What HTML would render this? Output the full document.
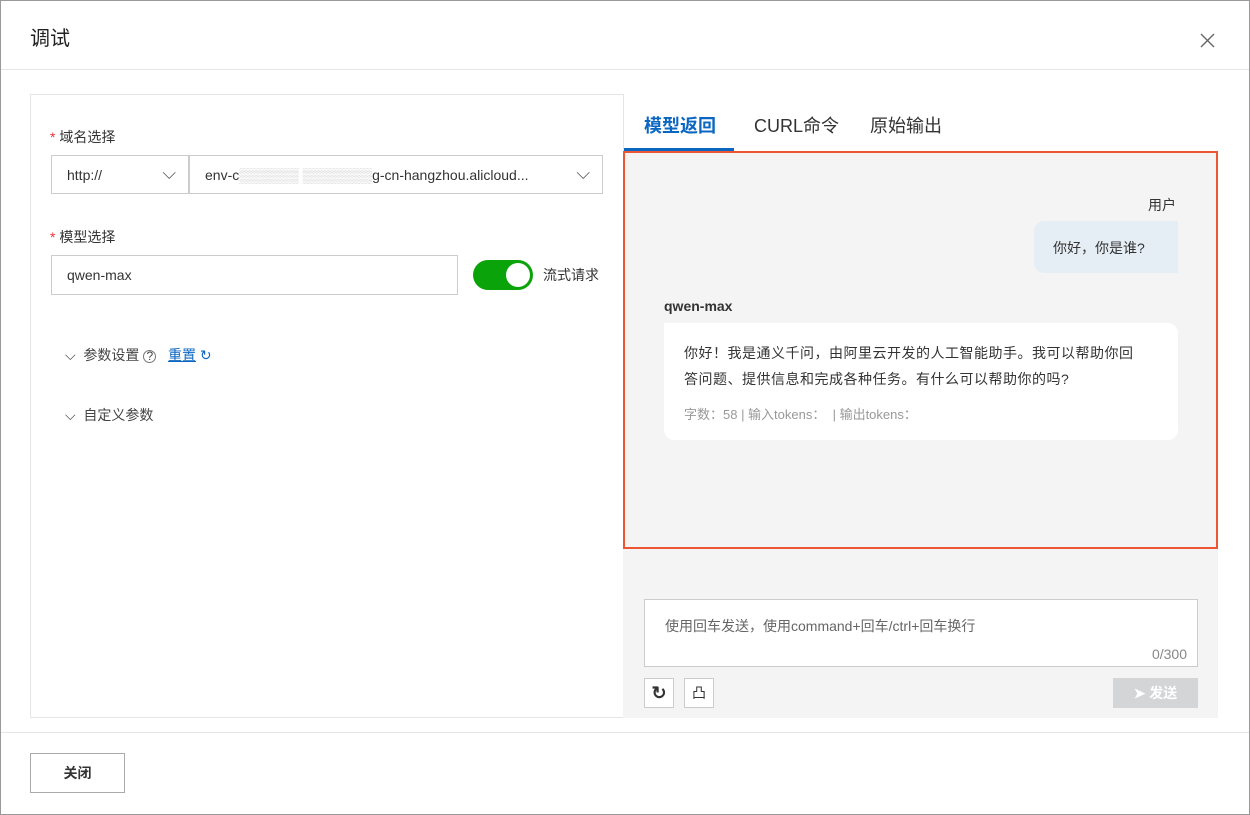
<!DOCTYPE html><html><head><meta charset="utf-8"><style>
*{box-sizing:border-box;margin:0;padding:0}
body{width:1250px;height:815px;background:#fff;font-family:"Liberation Sans","Noto Sans CJK SC",sans-serif;color:#333;font-size:14px;position:relative;overflow:hidden}
.a{position:absolute}
.box{border:1px solid #ccc;background:#fff}
</style></head><body>
<div class="a" style="inset:0;border:1px solid #999"></div>
<div class="a" style="left:30px;top:22px;font-size:20px;color:#222">调试</div>
<svg class="a" style="left:1200px;top:33px" width="15" height="15" viewBox="0 0 15 15"><path d="M1 1L14 14M14 1L1 14" stroke="#666" stroke-width="1.4"/></svg>
<div class="a" style="left:1px;right:1px;top:69px;height:1px;background:#e5e5e5"></div>
<div class="a" style="left:30px;top:94px;width:594px;height:624px;border:1px solid #e5e5e5"></div>
<div class="a" style="left:50px;top:127px"><span style="color:#e33">*</span> 域名选择</div>
<div class="a box" style="left:51px;top:155px;width:138px;height:39px;padding:11px 15px">http://<span style="position:absolute;right:12px;top:7px;color:#555;font-size:18px">⌵</span></div>
<div class="a box" style="left:189px;top:155px;width:414px;height:39px;padding:11px 15px">env-c<span style="color:#ccc">▒▒▒▒▒▒ ▒▒▒▒▒▒▒</span>g-cn-hangzhou.alicloud...<span style="position:absolute;right:12px;top:7px;color:#555;font-size:18px">⌵</span></div>
<div class="a" style="left:50px;top:227px"><span style="color:#e33">*</span> 模型选择</div>
<div class="a box" style="left:51px;top:255px;width:407px;height:40px;padding:11px 15px">qwen-max</div>
<div class="a" style="left:473px;top:260px;width:60px;height:30px;border-radius:15px;background:#0aa30a"><div class="a" style="right:3px;top:3px;width:24px;height:24px;border-radius:50%;background:#fff"></div></div>
<div class="a" style="left:543px;top:265px">流式请求</div>
<div class="a" style="left:65px;top:345px;color:#444">⌵&nbsp; 参数设置 <span style="font-size:12px;border:1px solid #777;border-radius:50%;display:inline-block;width:13px;height:13px;line-height:11px;text-align:center">?</span>&nbsp;&nbsp; <span style="color:#0b66c2;text-decoration:underline">重置</span> <span style="color:#0b66c2">↻</span></div>
<div class="a" style="left:65px;top:405px;color:#444">⌵&nbsp; 自定义参数</div>
<div class="a" style="left:644px;top:112px;font-size:18px;color:#0b66c2;font-weight:bold">模型返回</div>
<div class="a" style="left:624px;top:148px;width:110px;height:3px;background:#0b66c2"></div>
<div class="a" style="left:754px;top:112px;font-size:18px;color:#333">CURL命令</div>
<div class="a" style="left:870px;top:112px;font-size:18px;color:#333">原始输出</div>
<div class="a" style="left:623px;top:151px;width:595px;height:567px;background:#f4f4f4"></div>
<div class="a" style="left:623px;top:151px;width:595px;height:398px;border:2px solid #ee5533"></div>
<div class="a" style="left:1148px;top:195px">用户</div>
<div class="a" style="left:1034px;top:221px;width:144px;height:52px;background:#e6eef5;border-radius:10px 0 0 10px;padding:17px 19px">你好，你是谁?</div>
<div class="a" style="left:664px;top:298px;font-weight:bold">qwen-max</div>
<div class="a" style="left:664px;top:323px;width:514px;height:117px;background:#fff;border-radius:0 10px 10px 10px;padding:17px 24px 17px 20px;line-height:26px;letter-spacing:0.5px">你好！我是通义千问，由阿里云开发的人工智能助手。我可以帮助你回<br>答问题、提供信息和完成各种任务。有什么可以帮助你的吗?<div style="color:#999;font-size:13px;margin-top:10px;letter-spacing:0">字数：58 | 输入tokens：&nbsp; | 输出tokens：</div></div>
<div class="a box" style="left:644px;top:599px;width:554px;height:68px;padding:16px 20px;color:#666">使用回车发送，使用command+回车/ctrl+回车换行<span style="position:absolute;right:10px;bottom:4px;color:#888">0/300</span></div>
<div class="a box" style="left:644px;top:678px;width:30px;height:30px;text-align:center;line-height:28px;font-size:18px;font-weight:bold">↻</div>
<div class="a box" style="left:684px;top:678px;width:30px;height:30px;text-align:center;line-height:28px;font-size:14px">凸</div>
<div class="a" style="left:1113px;top:678px;width:85px;height:30px;background:#d3d5d7;color:#fff;text-align:center;line-height:30px;font-weight:bold">➤ 发送</div>
<div class="a" style="left:1px;right:1px;top:732px;height:1px;background:#e5e5e5"></div>
<div class="a box" style="left:30px;top:753px;width:95px;height:40px;border-color:#aaa;text-align:center;line-height:38px;font-weight:bold">关闭</div>
</body></html>
